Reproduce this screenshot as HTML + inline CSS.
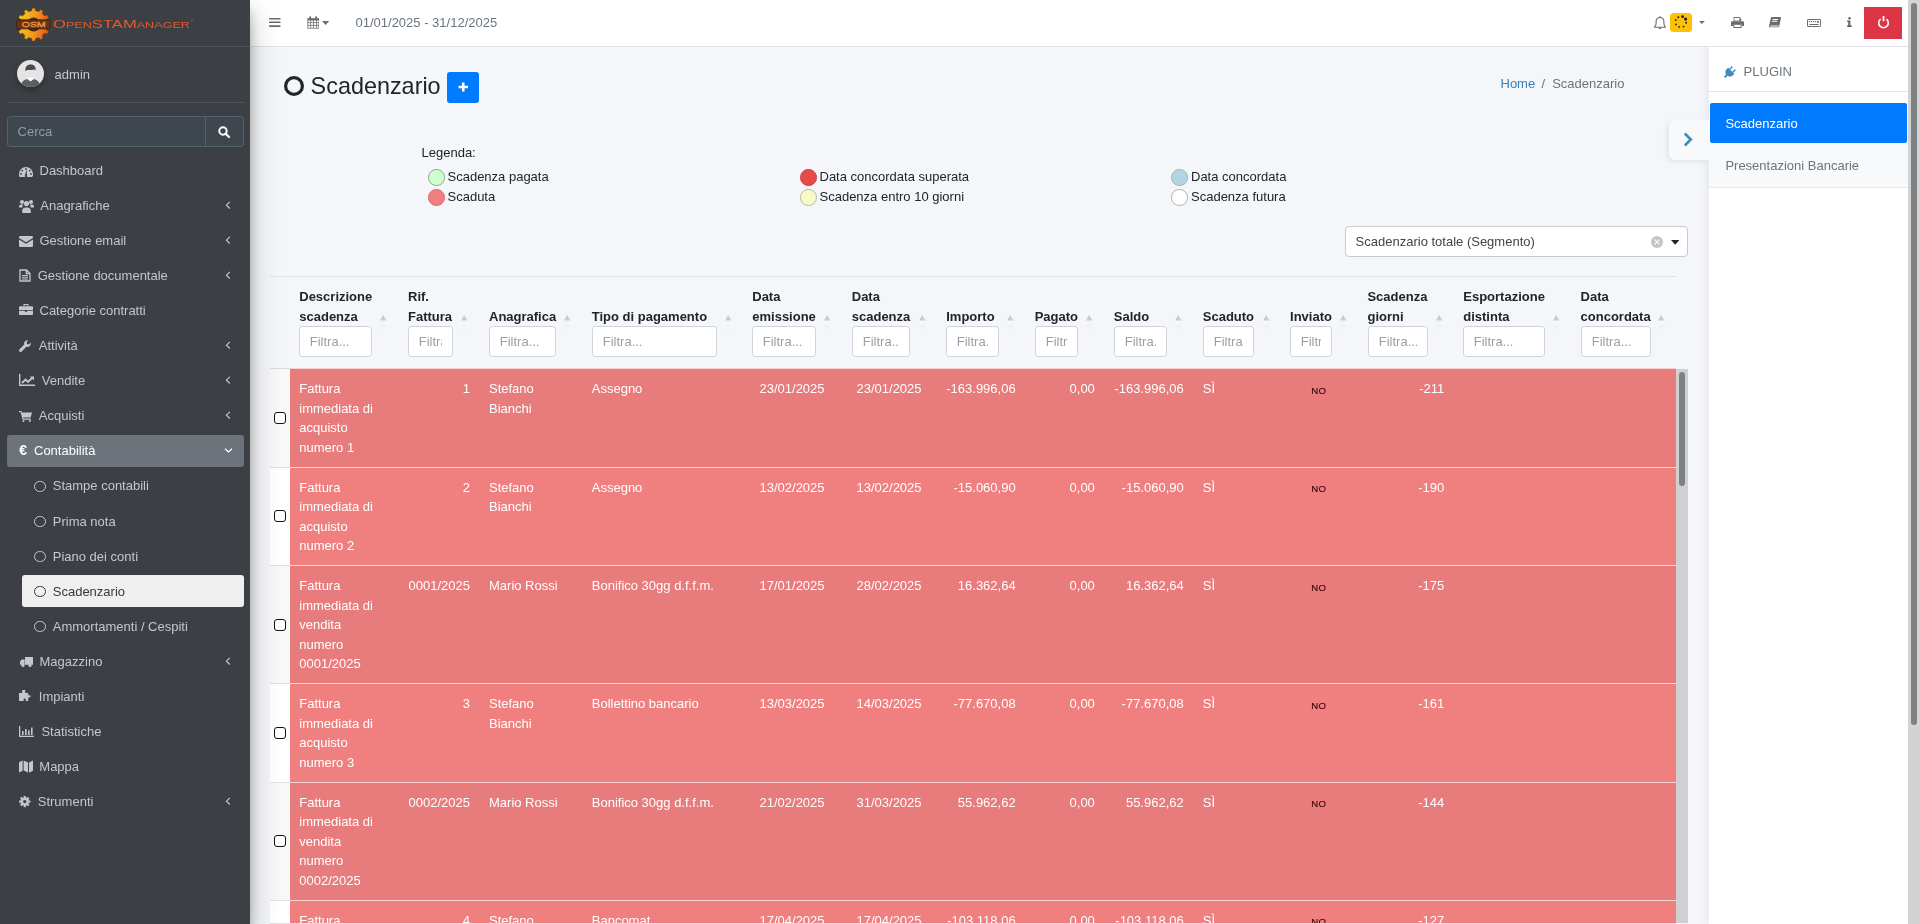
<!DOCTYPE html>
<html><head><meta charset="utf-8">
<style>
*{box-sizing:border-box}
html,body{margin:0;padding:0;width:1920px;height:924px;overflow:hidden}
body{font-family:"Liberation Sans",sans-serif;font-size:13px;line-height:1.5;color:#212529;background:#f4f6f9;position:relative}
.abs{position:absolute}
svg.abs{overflow:visible}
#sb{position:absolute;left:0;top:0;width:250px;height:924px;background:#3c3f44;z-index:7;box-shadow:0 14px 28px rgba(0,0,0,.25),0 10px 10px rgba(0,0,0,.22)}
#nb{position:absolute;left:250px;top:0;width:1658px;height:47px;background:#fff;border-bottom:1px solid #dee2e6;z-index:6}
#cs{position:absolute;left:1709px;top:47px;width:199px;height:877px;background:#fff;z-index:4;box-shadow:0 0 12px rgba(0,0,0,.09)}
#vs{position:absolute;left:1908px;top:0;width:12px;height:924px;background:#d3d3d3;z-index:9}
#vs .th{position:absolute;left:3px;top:3px;width:6px;height:722px;border-radius:3px;background:#7d8184}
</style></head><body>
<div id="root" style="position:absolute;left:0;top:0;width:1920px;height:924px;overflow:hidden;will-change:transform">
<div id="sb">
<div class="abs" style="left:0;top:46px;width:250px;height:1px;background:#50565d"></div>
<svg class="abs" style="left:17px;top:8px" width="34" height="34" viewBox="0 0 34 34">
<defs><linearGradient id="g1" gradientUnits="userSpaceOnUse" x1="2" y1="14" x2="32" y2="19"><stop offset="0" stop-color="#f6c716"/><stop offset=".55" stop-color="#f19420"/><stop offset="1" stop-color="#e6531f"/></linearGradient></defs>
<path d="M14.77 2.72 L15.13 0.17 L18.07 0.17 L18.43 2.72 L21.96 3.67 L23.55 1.63 L26.09 3.10 L25.12 5.49 L27.71 8.08 L30.10 7.11 L31.57 9.65 L29.53 11.24 L30.48 14.77 L33.03 15.13 L33.03 18.07 L30.48 18.43 L29.53 21.96 L31.57 23.55 L30.10 26.09 L27.71 25.12 L25.12 27.71 L26.09 30.10 L23.55 31.57 L21.96 29.53 L18.43 30.48 L18.07 33.03 L15.13 33.03 L14.77 30.48 L11.24 29.53 L9.65 31.57 L7.11 30.10 L8.08 27.71 L5.49 25.12 L3.10 26.09 L1.63 23.55 L3.67 21.96 L2.72 18.43 L0.17 18.07 L0.17 15.13 L2.72 14.77 L3.67 11.24 L1.63 9.65 L3.10 7.11 L5.49 8.08 L8.08 5.49 L7.11 3.10 L9.65 1.63 L11.24 3.67Z" fill="url(#g1)" stroke="#7a3a10" stroke-width=".4" stroke-linejoin="round"/>
<circle cx="16.6" cy="16.6" r="7" fill="#4a2a16"/>
<rect x="-0.4" y="11.8" width="33.4" height="9" rx="1.5" fill="#6a3412" stroke="#3e1d0a" stroke-width=".8"/>
<text x="16.8" y="19" font-family="Liberation Sans" font-size="7.4" fill="none" stroke="#f29a4a" stroke-width=".5" text-anchor="middle" textLength="24" lengthAdjust="spacingAndGlyphs">OSM</text>
</svg>
<svg class="abs" style="left:52px;top:14px" width="145" height="18" viewBox="0 0 145 18">
<text x="1" y="14" font-family="Liberation Sans" fill="#e35b2b" textLength="137" lengthAdjust="spacingAndGlyphs"><tspan font-size="11.3">O</tspan><tspan font-size="8.6">PEN</tspan><tspan font-size="11.3">STAM</tspan><tspan font-size="8.6">ANAGER</tspan></text>
<circle cx="140" cy="6.5" r="1.3" fill="none" stroke="#a05030" stroke-width=".5"/>
</svg>
<!-- user -->
<div class="abs" style="left:17px;top:60px;width:27px;height:27px;border-radius:50%;box-shadow:0 3px 6px rgba(0,0,0,.3)"></div>
<svg class="abs" style="left:17px;top:60px" width="27" height="27" viewBox="0 0 27 27">
<defs><clipPath id="cp"><circle cx="13.5" cy="13.5" r="13.5"/></clipPath></defs>
<circle cx="13.5" cy="13.5" r="13.5" fill="#e4e4e4"/>
<g clip-path="url(#cp)">
<path d="M3.5 27.5c.3-4.5 2.2-7.5 6.8-8.6l3.2 2.3 3.2-2.3c4.6 1.1 6.5 4.1 6.8 8.6z" fill="#5b5f63"/>
<path d="M10.3 18.9l3.2 2.3 3.2-2.3-.6-1.6h-5.2z" fill="#fafafa"/>
<path d="M8.4 11.2C8 6.6 10.3 4.6 13.5 4.6 16.9 4.6 19 6.4 18.6 10.6 18 10.2 17.6 9.8 17.2 9.4 15 10 12.4 10.1 10.2 9.9 9.6 10.3 9.1 10.7 8.4 11.2Z" fill="#474b4f"/>
</g>
</svg>
<div class="abs" style="left:54.6px;top:64.5px;line-height:19.5px;color:#c2c7d0">admin</div>
<div class="abs" style="left:7px;top:102px;width:237px;height:1px;background:#50565d"></div>
<!-- search -->
<div class="abs" style="left:7px;top:116px;width:237px;height:31px;border:1px solid #56606a;border-radius:3.25px;background:#3f474e"></div>
<div class="abs" style="left:205px;top:116px;width:1px;height:31px;background:#56606a"></div>
<div class="abs" style="left:17.6px;top:121.5px;line-height:19.5px;color:#939ba2">Cerca</div>
<svg class="abs" style="left:218px;top:126px" width="12" height="12" viewBox="0 0 12 12"><circle cx="5" cy="5" r="3.7" fill="none" stroke="#fff" stroke-width="2"/><path d="M7.6 7.6l3.4 3.4" stroke="#fff" stroke-width="2.2" stroke-linecap="round"/></svg>
<svg class="abs" style="left:19px;top:166.5px" width="14" height="10" viewBox="0 0 14 10"><path d="M7 0A7 7 0 0 0 0 7v1.2A1.4 1.4 0 0 0 1.4 10h11.2A1.4 1.4 0 0 0 14 8.6V7A7 7 0 0 0 7 0z" fill="#c2c7d0"/><circle cx="7" cy="2" r=".9" fill="#3c3f44"/><circle cx="3.2" cy="3.6" r=".9" fill="#3c3f44"/><circle cx="10.8" cy="3.6" r=".9" fill="#3c3f44"/><circle cx="2" cy="7" r=".9" fill="#3c3f44"/><circle cx="12" cy="7" r=".9" fill="#3c3f44"/><path d="M7.6 2.6L6 8.2A1.2 1.2 0 1 0 8 8.4z" fill="#3c3f44"/></svg>
<div class="abs" style="left:39.5px;top:160.5px;line-height:19.5px;color:#c2c7d0;white-space:nowrap">Dashboard</div>
<svg class="abs" style="left:19px;top:198.5px" width="15" height="14" viewBox="0 0 15 14" fill="#c2c7d0"><circle cx="3" cy="3" r="2"/><circle cx="12" cy="3" r="2"/><circle cx="7.5" cy="4.6" r="2.6"/><path d="M0 7.2a2 2 0 0 1 2-1.8h2.2a3 3 0 0 0-.6 3.2H0z"/><path d="M15 7.2a2 2 0 0 0-2-1.8h-2.2a3 3 0 0 1 .6 3.2H15z"/><path d="M3.2 12.2a3.4 3.4 0 0 1 3.4-3.8h1.8a3.4 3.4 0 0 1 3.4 3.8V14H3.2z"/></svg>
<div class="abs" style="left:40.25px;top:195.6px;line-height:19.5px;color:#c2c7d0;white-space:nowrap">Anagrafiche</div>
<svg class="abs" style="left:225px;top:200.7px" width="6" height="9" viewBox="0 0 6 9"><path d="M4.8 .9L1.4 4.2 4.8 7.5" fill="none" stroke="#c2c7d0" stroke-width="1.15"/></svg>
<svg class="abs" style="left:19px;top:235.5px" width="14" height="11" viewBox="0 0 14 11" fill="#c2c7d0"><path d="M1.3 0h11.4A1.3 1.3 0 0 1 14 1.3v.6L7 6.2 0 1.9v-.6A1.3 1.3 0 0 1 1.3 0z"/><path d="M0 3.4l7 4.4 7-4.4v6.3A1.3 1.3 0 0 1 12.7 11H1.3A1.3 1.3 0 0 1 0 9.7z"/></svg>
<div class="abs" style="left:39.5px;top:230.7px;line-height:19.5px;color:#c2c7d0;white-space:nowrap">Gestione email</div>
<svg class="abs" style="left:225px;top:235.8px" width="6" height="9" viewBox="0 0 6 9"><path d="M4.8 .9L1.4 4.2 4.8 7.5" fill="none" stroke="#c2c7d0" stroke-width="1.15"/></svg>
<svg class="abs" style="left:19px;top:269px" width="12" height="13" viewBox="0 0 12 13" fill="none" stroke="#c2c7d0" stroke-width="1.3"><path d="M1 1h6.5L11 4.5V12H1z"/><path d="M7.3 1v3.5H11"/><path d="M3 6.5h6M3 8.3h6M3 10.1h6" stroke-width="1"/></svg>
<div class="abs" style="left:37.75px;top:265.8px;line-height:19.5px;color:#c2c7d0;white-space:nowrap">Gestione documentale</div>
<svg class="abs" style="left:225px;top:270.9px" width="6" height="9" viewBox="0 0 6 9"><path d="M4.8 .9L1.4 4.2 4.8 7.5" fill="none" stroke="#c2c7d0" stroke-width="1.15"/></svg>
<svg class="abs" style="left:19px;top:304px" width="14" height="11" viewBox="0 0 14 11" fill="#c2c7d0"><path d="M4.5 0h5v2.2H8.5V1h-3v1.2h-1z"/><path d="M1 2.2h12A1 1 0 0 1 14 3.2V6H0V3.2a1 1 0 0 1 1-1z"/><path d="M0 6.8h5.8v1h2.4v-1H14V10a1 1 0 0 1-1 1H1a1 1 0 0 1-1-1z"/></svg>
<div class="abs" style="left:39.5px;top:300.9px;line-height:19.5px;color:#c2c7d0;white-space:nowrap">Categorie contratti</div>
<svg class="abs" style="left:19px;top:339.5px" width="12" height="12" viewBox="0 0 12 12" fill="#c2c7d0"><path d="M11.8 2.6L10 4.4 8.1 4 7.6 2.1 9.4.3A3.4 3.4 0 0 0 5.2 4.6L.5 9.2a1.5 1.5 0 0 0 2.2 2.2l4.7-4.6a3.4 3.4 0 0 0 4.4-4.2z"/></svg>
<div class="abs" style="left:38.75px;top:336.0px;line-height:19.5px;color:#c2c7d0;white-space:nowrap">Attività</div>
<svg class="abs" style="left:225px;top:341.1px" width="6" height="9" viewBox="0 0 6 9"><path d="M4.8 .9L1.4 4.2 4.8 7.5" fill="none" stroke="#c2c7d0" stroke-width="1.15"/></svg>
<svg class="abs" style="left:19px;top:374px" width="16" height="12" viewBox="0 0 16 12" fill="none" stroke="#c2c7d0"><path d="M.7 0v11.3H16" stroke-width="1.4"/><path d="M3 9l3.5-3.5 2.5 2.5 4.5-4.5" stroke-width="1.8"/><path d="M11 2.5h4v4z" fill="#c2c7d0" stroke="none"/></svg>
<div class="abs" style="left:41.75px;top:371.1px;line-height:19.5px;color:#c2c7d0;white-space:nowrap">Vendite</div>
<svg class="abs" style="left:225px;top:376.2px" width="6" height="9" viewBox="0 0 6 9"><path d="M4.8 .9L1.4 4.2 4.8 7.5" fill="none" stroke="#c2c7d0" stroke-width="1.15"/></svg>
<svg class="abs" style="left:19px;top:410.5px" width="13" height="11" viewBox="0 0 13 11" fill="#c2c7d0"><path d="M0 0h2.4l.5 1.5H13l-1.4 5H4.2l.3 1H12v1.2H3.6L1.6 1.2H0z"/><circle cx="4.5" cy="10" r="1"/><circle cx="10.8" cy="10" r="1"/></svg>
<div class="abs" style="left:38.75px;top:406.2px;line-height:19.5px;color:#c2c7d0;white-space:nowrap">Acquisti</div>
<svg class="abs" style="left:225px;top:411.3px" width="6" height="9" viewBox="0 0 6 9"><path d="M4.8 .9L1.4 4.2 4.8 7.5" fill="none" stroke="#c2c7d0" stroke-width="1.15"/></svg>
<div class="abs" style="left:7px;top:434.8px;width:237px;height:32px;border-radius:3px;background:#6c737b"></div>
<div class="abs" style="left:19.2px;top:440.5px;font-size:14px;line-height:19.5px;font-weight:bold;color:#fff">€</div>
<div class="abs" style="left:34px;top:441.3px;line-height:19.5px;color:#fff;white-space:nowrap">Contabilità</div>
<svg class="abs" style="left:224.2px;top:448.0px" width="9" height="6" viewBox="0 0 9 6"><path d="M1 .8l3.5 3.2L8 .8" fill="none" stroke="#fff" stroke-width="1.2"/></svg>
<div class="abs" style="left:34.4px;top:480.5px;width:11.4px;height:11.4px;border-radius:50%;border:1.8px solid #c2c7d0"></div>
<div class="abs" style="left:52.75px;top:476.4px;line-height:19.5px;color:#c2c7d0;white-space:nowrap">Stampe contabili</div>
<div class="abs" style="left:34.4px;top:515.6px;width:11.4px;height:11.4px;border-radius:50%;border:1.8px solid #c2c7d0"></div>
<div class="abs" style="left:52.75px;top:511.5px;line-height:19.5px;color:#c2c7d0;white-space:nowrap">Prima nota</div>
<div class="abs" style="left:34.4px;top:550.7px;width:11.4px;height:11.4px;border-radius:50%;border:1.8px solid #c2c7d0"></div>
<div class="abs" style="left:52.75px;top:546.6px;line-height:19.5px;color:#c2c7d0;white-space:nowrap">Piano dei conti</div>
<div class="abs" style="left:22px;top:575.2px;width:222px;height:32px;border-radius:3px;background:#efefef"></div>
<div class="abs" style="left:34.4px;top:585.8px;width:11.4px;height:11.4px;border-radius:50%;border:1.8px solid #343a40"></div>
<div class="abs" style="left:52.75px;top:581.7px;line-height:19.5px;color:#343a40;white-space:nowrap">Scadenzario</div>
<div class="abs" style="left:34.4px;top:620.9px;width:11.4px;height:11.4px;border-radius:50%;border:1.8px solid #c2c7d0"></div>
<div class="abs" style="left:52.75px;top:616.8px;line-height:19.5px;color:#c2c7d0;white-space:nowrap">Ammortamenti / Cespiti</div>
<svg class="abs" style="left:19.7px;top:657px" width="13" height="10" viewBox="0 0 13 10" fill="#c2c7d0"><path d="M5 0h8v7.8H5z"/><path d="M1.6 2.6h3v5.2H0V4.6z"/><circle cx="3" cy="8.4" r="1.6"/><circle cx="10" cy="8.4" r="1.6"/></svg>
<div class="abs" style="left:39.5px;top:651.9px;line-height:19.5px;color:#c2c7d0;white-space:nowrap">Magazzino</div>
<svg class="abs" style="left:225px;top:657.0px" width="6" height="9" viewBox="0 0 6 9"><path d="M4.8 .9L1.4 4.2 4.8 7.5" fill="none" stroke="#c2c7d0" stroke-width="1.15"/></svg>
<svg class="abs" style="left:19px;top:690px" width="13" height="11" viewBox="0 0 13 11" fill="#c2c7d0"><path d="M4 0h2.2v1.4a1 1 0 1 0 0 0V3h3v2.2h1.3a1.1 1.1 0 1 1 0 2.2H9.2V11H6.8V9.6a1.1 1.1 0 1 0-2.2 0V11H0V3h3.2V1.6A1 1 0 0 1 4 0z"/></svg>
<div class="abs" style="left:38.8px;top:687.0px;line-height:19.5px;color:#c2c7d0;white-space:nowrap">Impianti</div>
<svg class="abs" style="left:19px;top:726px" width="15" height="11" viewBox="0 0 15 11" fill="#c2c7d0"><path d="M0 0h1.3v9.7H15V11H0z"/><rect x="3" y="5" width="1.6" height="4"/><rect x="6" y="3" width="1.6" height="6"/><rect x="9" y="4.3" width="1.6" height="4.7"/><rect x="12" y="1.5" width="1.6" height="7.5"/></svg>
<div class="abs" style="left:41.4px;top:722.1px;line-height:19.5px;color:#c2c7d0;white-space:nowrap">Statistiche</div>
<svg class="abs" style="left:19px;top:760px" width="14" height="13" viewBox="0 0 14 13" fill="#c2c7d0"><path d="M0 2.3L3.6 0.5v10.2L0 12.5z"/><path d="M4.6 0.5l4.4 2v10l-4.4-2z"/><path d="M10 2.5l4-2v10.2l-4 2z"/></svg>
<div class="abs" style="left:39.3px;top:757.2px;line-height:19.5px;color:#c2c7d0;white-space:nowrap">Mappa</div>
<svg class="abs" style="left:19.2px;top:796px" width="11.5" height="11.2" viewBox="0 0 11.5 11.2"><g fill="#c2c7d0" transform="translate(5.75 5.6)"><circle r="4.1"/><rect x="-1.1" y="-5.6" width="2.2" height="11.2"/><rect x="-5.75" y="-1.1" width="11.5" height="2.2"/><rect x="-1.1" y="-5.6" width="2.2" height="11.2" transform="rotate(45)"/><rect x="-1.1" y="-5.6" width="2.2" height="11.2" transform="rotate(-45)"/></g><circle cx="5.75" cy="5.6" r="1.7" fill="#3c3f44"/></svg>
<div class="abs" style="left:37.75px;top:792.3px;line-height:19.5px;color:#c2c7d0;white-space:nowrap">Strumenti</div>
<svg class="abs" style="left:225px;top:797.4px" width="6" height="9" viewBox="0 0 6 9"><path d="M4.8 .9L1.4 4.2 4.8 7.5" fill="none" stroke="#c2c7d0" stroke-width="1.15"/></svg>
</div>
<div id="nb">
<svg class="abs" style="left:19px;top:17px" width="12" height="11" viewBox="0 0 12 11" fill="#6b6b6b"><rect x="0" y="1" width="11.6" height="1.6" rx=".6"/><rect x="0" y="4.5" width="11.6" height="1.6" rx=".6"/><rect x="0" y="8.2" width="11.6" height="1.7" rx=".6"/></svg>
<svg class="abs" style="left:56.5px;top:16px" width="13" height="13" viewBox="0 0 13 13"><path d="M.4 2.2h11.6v10.4H.4z" fill="#6b6b6b"/><rect x="2.3" y=".2" width="1.8" height="3.3" rx=".7" fill="#6b6b6b"/><rect x="8.2" y=".2" width="1.8" height="3.3" rx=".7" fill="#6b6b6b"/><g fill="#fff"><rect x="1.2" y="4.5" width="2.2" height="1.8"/><rect x="4.1" y="4.5" width="2.2" height="1.8"/><rect x="7" y="4.5" width="2.2" height="1.8"/><rect x="9.9" y="4.5" width="1.6" height="1.8"/><rect x="1.2" y="7.1" width="2.2" height="1.8"/><rect x="4.1" y="7.1" width="2.2" height="1.8"/><rect x="7" y="7.1" width="2.2" height="1.8"/><rect x="9.9" y="7.1" width="1.6" height="1.8"/><rect x="1.2" y="9.7" width="2.2" height="2.1"/><rect x="4.1" y="9.7" width="2.2" height="2.1"/><rect x="7" y="9.7" width="2.2" height="2.1"/><rect x="9.9" y="9.7" width="1.6" height="2.1"/></g></svg>
<svg class="abs" style="left:72.3px;top:20.8px" width="8" height="5" viewBox="0 0 8 5"><path d="M0 0h7.2L3.6 4z" fill="#6b6b6b"/></svg>
<div class="abs" style="left:105.5px;top:13.2px;line-height:19.5px;color:#6c757d">01/01/2025 - 31/12/2025</div>
<!-- right -->
<svg class="abs" style="left:1403.5px;top:15.5px" width="12" height="14" viewBox="0 0 12 14"><path d="M6 1.5c-2.4 0-3.9 1.8-3.9 4.2v2.5L.7 10.6v.6h10.6v-.6L9.9 8.2V5.7C9.9 3.3 8.4 1.5 6 1.5z" fill="none" stroke="#6b6b6b" stroke-width="1.1"/><rect x="5.3" y=".3" width="1.4" height="1.6" fill="#6b6b6b"/><path d="M4.6 11.8h2.8a1.4 1.4 0 0 1-2.8 0z" fill="#6b6b6b"/></svg>
<div class="abs" style="left:1420px;top:13px;width:22px;height:19px;border-radius:3.5px;background:#ffc107"></div>
<svg class="abs" style="left:1420px;top:13px" width="22" height="19" viewBox="0 0 22 19" fill="#1d1d1d"><circle cx="12.6" cy="3.7" r="1.4"/><circle cx="15.6" cy="6.1" r="1.6"/><circle cx="16.1" cy="9.7" r="1"/><circle cx="13.5" cy="13.6" r=".9"/><circle cx="9.1" cy="13.9" r=".9"/><circle cx="6" cy="11.4" r=".9"/><circle cx="5.7" cy="7" r=".9"/><circle cx="8.3" cy="4.3" r="1"/></svg>
<svg class="abs" style="left:1449px;top:21.2px" width="6" height="4" viewBox="0 0 6 4"><path d="M0 0h5.8L2.9 3z" fill="#6b6b6b"/></svg>
<svg class="abs" style="left:1481px;top:17px" width="13" height="11" viewBox="0 0 13 11" fill="#6b6b6b"><path d="M2.6 0h5.8l1.8 1.8v2.4H2.6z"/><path d="M1.2 4.2h10.6A1.2 1.2 0 0 1 13 5.4v3.6h-2.4v-2H2.4v2H0V5.4a1.2 1.2 0 0 1 1.2-1.2z"/><rect x="2.4" y="7" width="8.2" height="4"/><rect x="3.4" y="1" width="5" height="2.6" fill="#fff"/><rect x="3.4" y="7.8" width="6.2" height="2.2" fill="#fff"/></svg>
<svg class="abs" style="left:1519px;top:17px" width="12" height="11" viewBox="0 0 12 11" fill="#6b6b6b"><path d="M3 0h8.4a.6.6 0 0 1 .6.7L10.2 9.4a1.2 1.2 0 0 1-1.1.9H1a1 1 0 0 1-1-1.2L1.9.9A1.2 1.2 0 0 1 3 0z"/><path d="M1.4 8.6h8.3l-.3 1H1.3z" fill="#fff"/><rect x="4.2" y="2" width="5.2" height=".9" fill="#fff" transform="skewX(-12)"/><rect x="4" y="3.8" width="5.2" height=".9" fill="#fff" transform="skewX(-12)"/></svg>
<svg class="abs" style="left:1557px;top:19px" width="14" height="8" viewBox="0 0 14 8"><rect x=".5" y=".5" width="13" height="7" rx=".6" fill="none" stroke="#6b6b6b" stroke-width="1"/><g fill="#6b6b6b"><rect x="2" y="2" width="1.2" height="1.2"/><rect x="4" y="2" width="1.2" height="1.2"/><rect x="6" y="2" width="1.2" height="1.2"/><rect x="8" y="2" width="1.2" height="1.2"/><rect x="10" y="2" width="1.8" height="1.8"/><rect x="2.4" y="5" width="9.2" height="1"/></g></svg>
<svg class="abs" style="left:1596.5px;top:17px" width="5" height="10" viewBox="0 0 5 10" fill="#5f5f5f"><circle cx="2.5" cy="1.2" r="1.2"/><path d="M.2 3.4h3.1v4.9h1.3V10H.3V8.3h1V5H.2z"/></svg>
<div class="abs" style="left:1614px;top:7px;width:38px;height:32px;background:#dc3545"></div>
<svg class="abs" style="left:1626.5px;top:16px" width="13" height="12" viewBox="0 0 13 12"><path d="M3.6 3.1a4.8 4.8 0 1 0 5.8 0" fill="none" stroke="#fff" stroke-width="1.6"/><path d="M6.5 0v5.2" stroke="#fff" stroke-width="1.8"/></svg>
</div>
<div id="content">
<svg class="abs" style="left:284px;top:76px" width="20" height="20" viewBox="0 0 20 20"><circle cx="10" cy="10" r="8.4" fill="none" stroke="#212529" stroke-width="3.2"/></svg>
<div class="abs" style="left:310.6px;top:72px;font-size:23.4px;line-height:28px;color:#212529;white-space:nowrap">Scadenzario</div>
<div class="abs" style="left:447px;top:72px;width:32px;height:30.5px;background:#007bff;border-radius:3px"></div>
<svg class="abs" style="left:457.8px;top:82.3px" width="10.5" height="10" viewBox="0 0 10.5 10"><path d="M5.25 .5v9M.5 5h9.5" stroke="#fff" stroke-width="2.6"/></svg>
<div class="abs" style="left:1500.5px;top:73.8px;line-height:19.5px;color:#3480c0;white-space:nowrap;">Home</div>
<div class="abs" style="left:1541.5px;top:73.8px;line-height:19.5px;color:#6c757d;white-space:nowrap;">/</div>
<div class="abs" style="left:1552.2px;top:73.8px;line-height:19.5px;color:#6c757d;white-space:nowrap;">Scadenzario</div>
<div class="abs" style="left:421.5px;top:142.7px;line-height:19.5px;color:#212529;white-space:nowrap;">Legenda:</div>
<div class="abs" style="left:428px;top:169px;width:16.5px;height:16.5px;border-radius:50%;background:#ccffcc;border:1px solid #8fa88f"></div>
<div class="abs" style="left:447.5px;top:167px;line-height:19.5px;color:#212529;white-space:nowrap;">Scadenza pagata</div>
<div class="abs" style="left:428px;top:189px;width:16.5px;height:16.5px;border-radius:50%;background:#f08080;border:1px solid #d77272"></div>
<div class="abs" style="left:447.5px;top:187px;line-height:19.5px;color:#212529;white-space:nowrap;">Scaduta</div>
<div class="abs" style="left:800px;top:169px;width:16.5px;height:16.5px;border-radius:50%;background:#e84a4a;border:1px solid #c94444"></div>
<div class="abs" style="left:819.5px;top:167px;line-height:19.5px;color:#212529;white-space:nowrap;">Data concordata superata</div>
<div class="abs" style="left:800px;top:189px;width:16.5px;height:16.5px;border-radius:50%;background:#fafac8;border:1px solid #b8b89a"></div>
<div class="abs" style="left:819.5px;top:187px;line-height:19.5px;color:#212529;white-space:nowrap;">Scadenza entro 10 giorni</div>
<div class="abs" style="left:1171px;top:169px;width:16.5px;height:16.5px;border-radius:50%;background:#b3d4e2;border:1px solid #9ab6c2"></div>
<div class="abs" style="left:1191px;top:167px;line-height:19.5px;color:#212529;white-space:nowrap;">Data concordata</div>
<div class="abs" style="left:1171px;top:189px;width:16.5px;height:16.5px;border-radius:50%;background:#ffffff;border:1px solid #b0b0b0"></div>
<div class="abs" style="left:1191px;top:187px;line-height:19.5px;color:#212529;white-space:nowrap;">Scadenza futura</div>
<div class="abs" style="left:1345.4px;top:226.4px;width:342.3px;height:30.2px;background:#fff;border:1px solid #c6cbd1;border-radius:4px"></div>
<div class="abs" style="left:1355.6px;top:232.3px;line-height:19.5px;color:#444;white-space:nowrap;">Scadenzario totale (Segmento)</div>
<svg class="abs" style="left:1651px;top:236px" width="12" height="12" viewBox="0 0 12 12"><circle cx="6" cy="6" r="6" fill="#c4c4c4"/><path d="M3.6 3.6l4.8 4.8M8.4 3.6L3.6 8.4" stroke="#fff" stroke-width="1.1"/></svg>
<svg class="abs" style="left:1671px;top:239.8px" width="9" height="5" viewBox="0 0 9 5"><path d="M0 0h8.4L4.2 4.8z" fill="#212529"/></svg>
<div class="abs" style="left:270px;top:276px;width:1406px;height:1px;background:#dfe2e5"></div>
<div class="abs" style="left:299.25px;top:287px;line-height:19.5px;color:#212529;white-space:nowrap;font-weight:bold">Descrizione</div>
<div class="abs" style="left:299.25px;top:306.5px;line-height:19.5px;color:#212529;white-space:nowrap;font-weight:bold">scadenza</div>
<div class="abs" style="left:299px;top:326px;width:73px;height:31px;background:#fff;border:1px solid #ced4da;border-radius:3.25px"><div class="abs" style="left:9.75px;top:4.75px;width:51.50px;height:19.5px;overflow:hidden;line-height:19.5px;color:#9aa0a6;white-space:nowrap">Filtra...</div></div>
<svg class="abs" style="left:380.45px;top:315.2px" width="6.3" height="5.5" viewBox="0 0 6.3 5.5"><path d="M3.15 0L6.3 5.5H0z" fill="#c9cbce"/></svg>
<svg class="abs" style="left:380.45px;top:325px" width="6.3" height="5.5" viewBox="0 0 6.3 5.5"><path d="M0 0h6.3L3.15 5.5z" fill="#f0f1f4"/></svg>
<div class="abs" style="left:408.0px;top:287px;line-height:19.5px;color:#212529;white-space:nowrap;font-weight:bold">Rif.</div>
<div class="abs" style="left:408.0px;top:306.5px;line-height:19.5px;color:#212529;white-space:nowrap;font-weight:bold">Fattura</div>
<div class="abs" style="left:408px;top:326px;width:45px;height:31px;background:#fff;border:1px solid #ced4da;border-radius:3.25px"><div class="abs" style="left:9.75px;top:4.75px;width:23.50px;height:19.5px;overflow:hidden;line-height:19.5px;color:#9aa0a6;white-space:nowrap">Filtra...</div></div>
<svg class="abs" style="left:461.45px;top:315.2px" width="6.3" height="5.5" viewBox="0 0 6.3 5.5"><path d="M3.15 0L6.3 5.5H0z" fill="#c9cbce"/></svg>
<svg class="abs" style="left:461.45px;top:325px" width="6.3" height="5.5" viewBox="0 0 6.3 5.5"><path d="M0 0h6.3L3.15 5.5z" fill="#f0f1f4"/></svg>
<div class="abs" style="left:489.0px;top:306.5px;line-height:19.5px;color:#212529;white-space:nowrap;font-weight:bold">Anagrafica</div>
<div class="abs" style="left:489px;top:326px;width:67px;height:31px;background:#fff;border:1px solid #ced4da;border-radius:3.25px"><div class="abs" style="left:9.75px;top:4.75px;width:45.50px;height:19.5px;overflow:hidden;line-height:19.5px;color:#9aa0a6;white-space:nowrap">Filtra...</div></div>
<svg class="abs" style="left:564.20px;top:315.2px" width="6.3" height="5.5" viewBox="0 0 6.3 5.5"><path d="M3.15 0L6.3 5.5H0z" fill="#c9cbce"/></svg>
<svg class="abs" style="left:564.20px;top:325px" width="6.3" height="5.5" viewBox="0 0 6.3 5.5"><path d="M0 0h6.3L3.15 5.5z" fill="#f0f1f4"/></svg>
<div class="abs" style="left:591.75px;top:306.5px;line-height:19.5px;color:#212529;white-space:nowrap;font-weight:bold">Tipo di pagamento</div>
<div class="abs" style="left:592px;top:326px;width:125px;height:31px;background:#fff;border:1px solid #ced4da;border-radius:3.25px"><div class="abs" style="left:9.75px;top:4.75px;width:103.50px;height:19.5px;overflow:hidden;line-height:19.5px;color:#9aa0a6;white-space:nowrap">Filtra...</div></div>
<svg class="abs" style="left:724.70px;top:315.2px" width="6.3" height="5.5" viewBox="0 0 6.3 5.5"><path d="M3.15 0L6.3 5.5H0z" fill="#c9cbce"/></svg>
<svg class="abs" style="left:724.70px;top:325px" width="6.3" height="5.5" viewBox="0 0 6.3 5.5"><path d="M0 0h6.3L3.15 5.5z" fill="#f0f1f4"/></svg>
<div class="abs" style="left:752.25px;top:287px;line-height:19.5px;color:#212529;white-space:nowrap;font-weight:bold">Data</div>
<div class="abs" style="left:752.25px;top:306.5px;line-height:19.5px;color:#212529;white-space:nowrap;font-weight:bold">emissione</div>
<div class="abs" style="left:752px;top:326px;width:64px;height:31px;background:#fff;border:1px solid #ced4da;border-radius:3.25px"><div class="abs" style="left:9.75px;top:4.75px;width:42.50px;height:19.5px;overflow:hidden;line-height:19.5px;color:#9aa0a6;white-space:nowrap">Filtra...</div></div>
<svg class="abs" style="left:824.20px;top:315.2px" width="6.3" height="5.5" viewBox="0 0 6.3 5.5"><path d="M3.15 0L6.3 5.5H0z" fill="#c9cbce"/></svg>
<svg class="abs" style="left:824.20px;top:325px" width="6.3" height="5.5" viewBox="0 0 6.3 5.5"><path d="M0 0h6.3L3.15 5.5z" fill="#f0f1f4"/></svg>
<div class="abs" style="left:851.75px;top:287px;line-height:19.5px;color:#212529;white-space:nowrap;font-weight:bold">Data</div>
<div class="abs" style="left:851.75px;top:306.5px;line-height:19.5px;color:#212529;white-space:nowrap;font-weight:bold">scadenza</div>
<div class="abs" style="left:852px;top:326px;width:58px;height:31px;background:#fff;border:1px solid #ced4da;border-radius:3.25px"><div class="abs" style="left:9.75px;top:4.75px;width:36.50px;height:19.5px;overflow:hidden;line-height:19.5px;color:#9aa0a6;white-space:nowrap">Filtra...</div></div>
<svg class="abs" style="left:918.70px;top:315.2px" width="6.3" height="5.5" viewBox="0 0 6.3 5.5"><path d="M3.15 0L6.3 5.5H0z" fill="#c9cbce"/></svg>
<svg class="abs" style="left:918.70px;top:325px" width="6.3" height="5.5" viewBox="0 0 6.3 5.5"><path d="M0 0h6.3L3.15 5.5z" fill="#f0f1f4"/></svg>
<div class="abs" style="left:946.25px;top:306.5px;line-height:19.5px;color:#212529;white-space:nowrap;font-weight:bold">Importo</div>
<div class="abs" style="left:946px;top:326px;width:53px;height:31px;background:#fff;border:1px solid #ced4da;border-radius:3.25px"><div class="abs" style="left:9.75px;top:4.75px;width:31.50px;height:19.5px;overflow:hidden;line-height:19.5px;color:#9aa0a6;white-space:nowrap">Filtra...</div></div>
<svg class="abs" style="left:1007.10px;top:315.2px" width="6.3" height="5.5" viewBox="0 0 6.3 5.5"><path d="M3.15 0L6.3 5.5H0z" fill="#c9cbce"/></svg>
<svg class="abs" style="left:1007.10px;top:325px" width="6.3" height="5.5" viewBox="0 0 6.3 5.5"><path d="M0 0h6.3L3.15 5.5z" fill="#f0f1f4"/></svg>
<div class="abs" style="left:1034.65px;top:306.5px;line-height:19.5px;color:#212529;white-space:nowrap;font-weight:bold">Pagato</div>
<div class="abs" style="left:1035px;top:326px;width:43px;height:31px;background:#fff;border:1px solid #ced4da;border-radius:3.25px"><div class="abs" style="left:9.75px;top:4.75px;width:21.50px;height:19.5px;overflow:hidden;line-height:19.5px;color:#9aa0a6;white-space:nowrap">Filtra...</div></div>
<svg class="abs" style="left:1086.30px;top:315.2px" width="6.3" height="5.5" viewBox="0 0 6.3 5.5"><path d="M3.15 0L6.3 5.5H0z" fill="#c9cbce"/></svg>
<svg class="abs" style="left:1086.30px;top:325px" width="6.3" height="5.5" viewBox="0 0 6.3 5.5"><path d="M0 0h6.3L3.15 5.5z" fill="#f0f1f4"/></svg>
<div class="abs" style="left:1113.85px;top:306.5px;line-height:19.5px;color:#212529;white-space:nowrap;font-weight:bold">Saldo</div>
<div class="abs" style="left:1114px;top:326px;width:53px;height:31px;background:#fff;border:1px solid #ced4da;border-radius:3.25px"><div class="abs" style="left:9.75px;top:4.75px;width:31.50px;height:19.5px;overflow:hidden;line-height:19.5px;color:#9aa0a6;white-space:nowrap">Filtra...</div></div>
<svg class="abs" style="left:1175.20px;top:315.2px" width="6.3" height="5.5" viewBox="0 0 6.3 5.5"><path d="M3.15 0L6.3 5.5H0z" fill="#c9cbce"/></svg>
<svg class="abs" style="left:1175.20px;top:325px" width="6.3" height="5.5" viewBox="0 0 6.3 5.5"><path d="M0 0h6.3L3.15 5.5z" fill="#f0f1f4"/></svg>
<div class="abs" style="left:1202.75px;top:306.5px;line-height:19.5px;color:#212529;white-space:nowrap;font-weight:bold">Scaduto</div>
<div class="abs" style="left:1203px;top:326px;width:51px;height:31px;background:#fff;border:1px solid #ced4da;border-radius:3.25px"><div class="abs" style="left:9.75px;top:4.75px;width:29.50px;height:19.5px;overflow:hidden;line-height:19.5px;color:#9aa0a6;white-space:nowrap">Filtra...</div></div>
<svg class="abs" style="left:1262.50px;top:315.2px" width="6.3" height="5.5" viewBox="0 0 6.3 5.5"><path d="M3.15 0L6.3 5.5H0z" fill="#c9cbce"/></svg>
<svg class="abs" style="left:1262.50px;top:325px" width="6.3" height="5.5" viewBox="0 0 6.3 5.5"><path d="M0 0h6.3L3.15 5.5z" fill="#f0f1f4"/></svg>
<div class="abs" style="left:1290.05px;top:306.5px;line-height:19.5px;color:#212529;white-space:nowrap;font-weight:bold">Inviato</div>
<div class="abs" style="left:1290px;top:326px;width:42px;height:31px;background:#fff;border:1px solid #ced4da;border-radius:3.25px"><div class="abs" style="left:9.75px;top:4.75px;width:20.50px;height:19.5px;overflow:hidden;line-height:19.5px;color:#9aa0a6;white-space:nowrap">Filtra...</div></div>
<svg class="abs" style="left:1339.90px;top:315.2px" width="6.3" height="5.5" viewBox="0 0 6.3 5.5"><path d="M3.15 0L6.3 5.5H0z" fill="#c9cbce"/></svg>
<svg class="abs" style="left:1339.90px;top:325px" width="6.3" height="5.5" viewBox="0 0 6.3 5.5"><path d="M0 0h6.3L3.15 5.5z" fill="#f0f1f4"/></svg>
<div class="abs" style="left:1367.45px;top:287px;line-height:19.5px;color:#212529;white-space:nowrap;font-weight:bold">Scadenza</div>
<div class="abs" style="left:1367.45px;top:306.5px;line-height:19.5px;color:#212529;white-space:nowrap;font-weight:bold">giorni</div>
<div class="abs" style="left:1368px;top:326px;width:60px;height:31px;background:#fff;border:1px solid #ced4da;border-radius:3.25px"><div class="abs" style="left:9.75px;top:4.75px;width:38.50px;height:19.5px;overflow:hidden;line-height:19.5px;color:#9aa0a6;white-space:nowrap">Filtra...</div></div>
<svg class="abs" style="left:1435.70px;top:315.2px" width="6.3" height="5.5" viewBox="0 0 6.3 5.5"><path d="M3.15 0L6.3 5.5H0z" fill="#c9cbce"/></svg>
<svg class="abs" style="left:1435.70px;top:325px" width="6.3" height="5.5" viewBox="0 0 6.3 5.5"><path d="M0 0h6.3L3.15 5.5z" fill="#f0f1f4"/></svg>
<div class="abs" style="left:1463.25px;top:287px;line-height:19.5px;color:#212529;white-space:nowrap;font-weight:bold">Esportazione</div>
<div class="abs" style="left:1463.25px;top:306.5px;line-height:19.5px;color:#212529;white-space:nowrap;font-weight:bold">distinta</div>
<div class="abs" style="left:1463px;top:326px;width:82px;height:31px;background:#fff;border:1px solid #ced4da;border-radius:3.25px"><div class="abs" style="left:9.75px;top:4.75px;width:60.50px;height:19.5px;overflow:hidden;line-height:19.5px;color:#9aa0a6;white-space:nowrap">Filtra...</div></div>
<svg class="abs" style="left:1553.00px;top:315.2px" width="6.3" height="5.5" viewBox="0 0 6.3 5.5"><path d="M3.15 0L6.3 5.5H0z" fill="#c9cbce"/></svg>
<svg class="abs" style="left:1553.00px;top:325px" width="6.3" height="5.5" viewBox="0 0 6.3 5.5"><path d="M0 0h6.3L3.15 5.5z" fill="#f0f1f4"/></svg>
<div class="abs" style="left:1580.55px;top:287px;line-height:19.5px;color:#212529;white-space:nowrap;font-weight:bold">Data</div>
<div class="abs" style="left:1580.55px;top:306.5px;line-height:19.5px;color:#212529;white-space:nowrap;font-weight:bold">concordata</div>
<div class="abs" style="left:1581px;top:326px;width:70px;height:31px;background:#fff;border:1px solid #ced4da;border-radius:3.25px"><div class="abs" style="left:9.75px;top:4.75px;width:48.50px;height:19.5px;overflow:hidden;line-height:19.5px;color:#9aa0a6;white-space:nowrap">Filtra...</div></div>
<svg class="abs" style="left:1658.20px;top:315.2px" width="6.3" height="5.5" viewBox="0 0 6.3 5.5"><path d="M3.15 0L6.3 5.5H0z" fill="#c9cbce"/></svg>
<svg class="abs" style="left:1658.20px;top:325px" width="6.3" height="5.5" viewBox="0 0 6.3 5.5"><path d="M0 0h6.3L3.15 5.5z" fill="#f0f1f4"/></svg>
<div class="abs" style="left:270px;top:367.5px;width:20px;height:1.5px;background:#dadde0"></div>
<div class="abs" style="left:290px;top:367.5px;width:1386px;height:1.5px;background:#f7d0d0"></div>
<div class="abs" style="left:270px;top:369px;width:1406px;height:554px;overflow:hidden">
<div class="abs" style="left:0;top:0.00px;width:20px;height:97.5px;background:#f8f8f8"></div>
<div class="abs" style="left:20px;top:0.00px;width:1386px;height:97.5px;background:#e87b7b"></div>
<div class="abs" style="left:4px;top:42.75px;width:12px;height:12px;border:1.5px solid #111;border-radius:3px;background:#fff"></div>
<div class="abs" style="left:29.25px;top:10.10px;line-height:19.5px;color:#fff;white-space:nowrap;">Fattura<br>immediata di<br>acquisto<br>numero 1</div>
<div class="abs" style="right:1206.00px;top:10.10px;line-height:19.5px;color:#fff;white-space:nowrap;text-align:right;">1</div>
<div class="abs" style="left:219.00px;top:10.10px;line-height:19.5px;color:#fff;white-space:nowrap;">Stefano<br>Bianchi</div>
<div class="abs" style="left:321.75px;top:10.10px;line-height:19.5px;color:#fff;white-space:nowrap;">Assegno</div>
<div class="abs" style="left:472.30px;width:99.50px;top:10.10px;line-height:19.5px;color:#fff;white-space:nowrap;text-align:center;">23/01/2025</div>
<div class="abs" style="left:571.80px;width:94.50px;top:10.10px;line-height:19.5px;color:#fff;white-space:nowrap;text-align:center;">23/01/2025</div>
<div class="abs" style="right:660.35px;top:10.10px;line-height:19.5px;color:#fff;white-space:nowrap;text-align:right;">-163.996,06</div>
<div class="abs" style="right:581.15px;top:10.10px;line-height:19.5px;color:#fff;white-space:nowrap;text-align:right;">0,00</div>
<div class="abs" style="right:492.25px;top:10.10px;line-height:19.5px;color:#fff;white-space:nowrap;text-align:right;">-163.996,06</div>
<div class="abs" style="left:932.75px;top:10.10px;line-height:19.5px;color:#fff;white-space:nowrap;">SÌ</div>
<div class="abs" style="left:1010.10px;width:77.40px;top:10.70px;line-height:19.5px;text-align:center;white-space:nowrap"><span style="display:inline-block;font-size:8.6px;font-weight:normal;-webkit-text-stroke:.15px #3a0808;color:#3a0808;transform:scaleX(1.12);letter-spacing:.3px">NO</span></div>
<div class="abs" style="right:231.75px;top:10.10px;line-height:19.5px;color:#fff;white-space:nowrap;text-align:right;">-211</div>
<div class="abs" style="left:0;top:97.50px;width:20px;height:1px;background:#dee2e6"></div>
<div class="abs" style="left:20px;top:97.50px;width:1386px;height:1px;background:#fbd3d3"></div>
<div class="abs" style="left:0;top:98.50px;width:20px;height:97.5px;background:#fff"></div>
<div class="abs" style="left:20px;top:98.50px;width:1386px;height:97.5px;background:#f08080"></div>
<div class="abs" style="left:4px;top:141.25px;width:12px;height:12px;border:1.5px solid #111;border-radius:3px;background:#fff"></div>
<div class="abs" style="left:29.25px;top:108.60px;line-height:19.5px;color:#fff;white-space:nowrap;">Fattura<br>immediata di<br>acquisto<br>numero 2</div>
<div class="abs" style="right:1206.00px;top:108.60px;line-height:19.5px;color:#fff;white-space:nowrap;text-align:right;">2</div>
<div class="abs" style="left:219.00px;top:108.60px;line-height:19.5px;color:#fff;white-space:nowrap;">Stefano<br>Bianchi</div>
<div class="abs" style="left:321.75px;top:108.60px;line-height:19.5px;color:#fff;white-space:nowrap;">Assegno</div>
<div class="abs" style="left:472.30px;width:99.50px;top:108.60px;line-height:19.5px;color:#fff;white-space:nowrap;text-align:center;">13/02/2025</div>
<div class="abs" style="left:571.80px;width:94.50px;top:108.60px;line-height:19.5px;color:#fff;white-space:nowrap;text-align:center;">13/02/2025</div>
<div class="abs" style="right:660.35px;top:108.60px;line-height:19.5px;color:#fff;white-space:nowrap;text-align:right;">-15.060,90</div>
<div class="abs" style="right:581.15px;top:108.60px;line-height:19.5px;color:#fff;white-space:nowrap;text-align:right;">0,00</div>
<div class="abs" style="right:492.25px;top:108.60px;line-height:19.5px;color:#fff;white-space:nowrap;text-align:right;">-15.060,90</div>
<div class="abs" style="left:932.75px;top:108.60px;line-height:19.5px;color:#fff;white-space:nowrap;">SÌ</div>
<div class="abs" style="left:1010.10px;width:77.40px;top:109.20px;line-height:19.5px;text-align:center;white-space:nowrap"><span style="display:inline-block;font-size:8.6px;font-weight:normal;-webkit-text-stroke:.15px #3a0808;color:#3a0808;transform:scaleX(1.12);letter-spacing:.3px">NO</span></div>
<div class="abs" style="right:231.75px;top:108.60px;line-height:19.5px;color:#fff;white-space:nowrap;text-align:right;">-190</div>
<div class="abs" style="left:0;top:196.00px;width:20px;height:1px;background:#dee2e6"></div>
<div class="abs" style="left:20px;top:196.00px;width:1386px;height:1px;background:#fbd3d3"></div>
<div class="abs" style="left:0;top:197.00px;width:20px;height:117.0px;background:#f8f8f8"></div>
<div class="abs" style="left:20px;top:197.00px;width:1386px;height:117.0px;background:#e87b7b"></div>
<div class="abs" style="left:4px;top:249.50px;width:12px;height:12px;border:1.5px solid #111;border-radius:3px;background:#fff"></div>
<div class="abs" style="left:29.25px;top:207.10px;line-height:19.5px;color:#fff;white-space:nowrap;">Fattura<br>immediata di<br>vendita<br>numero<br>0001/2025</div>
<div class="abs" style="right:1206.00px;top:207.10px;line-height:19.5px;color:#fff;white-space:nowrap;text-align:right;">0001/2025</div>
<div class="abs" style="left:219.00px;top:207.10px;line-height:19.5px;color:#fff;white-space:nowrap;">Mario Rossi</div>
<div class="abs" style="left:321.75px;top:207.10px;line-height:19.5px;color:#fff;white-space:nowrap;">Bonifico 30gg d.f.f.m.</div>
<div class="abs" style="left:472.30px;width:99.50px;top:207.10px;line-height:19.5px;color:#fff;white-space:nowrap;text-align:center;">17/01/2025</div>
<div class="abs" style="left:571.80px;width:94.50px;top:207.10px;line-height:19.5px;color:#fff;white-space:nowrap;text-align:center;">28/02/2025</div>
<div class="abs" style="right:660.35px;top:207.10px;line-height:19.5px;color:#fff;white-space:nowrap;text-align:right;">16.362,64</div>
<div class="abs" style="right:581.15px;top:207.10px;line-height:19.5px;color:#fff;white-space:nowrap;text-align:right;">0,00</div>
<div class="abs" style="right:492.25px;top:207.10px;line-height:19.5px;color:#fff;white-space:nowrap;text-align:right;">16.362,64</div>
<div class="abs" style="left:932.75px;top:207.10px;line-height:19.5px;color:#fff;white-space:nowrap;">SÌ</div>
<div class="abs" style="left:1010.10px;width:77.40px;top:207.70px;line-height:19.5px;text-align:center;white-space:nowrap"><span style="display:inline-block;font-size:8.6px;font-weight:normal;-webkit-text-stroke:.15px #3a0808;color:#3a0808;transform:scaleX(1.12);letter-spacing:.3px">NO</span></div>
<div class="abs" style="right:231.75px;top:207.10px;line-height:19.5px;color:#fff;white-space:nowrap;text-align:right;">-175</div>
<div class="abs" style="left:0;top:314.00px;width:20px;height:1px;background:#dee2e6"></div>
<div class="abs" style="left:20px;top:314.00px;width:1386px;height:1px;background:#fbd3d3"></div>
<div class="abs" style="left:0;top:315.00px;width:20px;height:97.5px;background:#fff"></div>
<div class="abs" style="left:20px;top:315.00px;width:1386px;height:97.5px;background:#f08080"></div>
<div class="abs" style="left:4px;top:357.75px;width:12px;height:12px;border:1.5px solid #111;border-radius:3px;background:#fff"></div>
<div class="abs" style="left:29.25px;top:325.10px;line-height:19.5px;color:#fff;white-space:nowrap;">Fattura<br>immediata di<br>acquisto<br>numero 3</div>
<div class="abs" style="right:1206.00px;top:325.10px;line-height:19.5px;color:#fff;white-space:nowrap;text-align:right;">3</div>
<div class="abs" style="left:219.00px;top:325.10px;line-height:19.5px;color:#fff;white-space:nowrap;">Stefano<br>Bianchi</div>
<div class="abs" style="left:321.75px;top:325.10px;line-height:19.5px;color:#fff;white-space:nowrap;">Bollettino bancario</div>
<div class="abs" style="left:472.30px;width:99.50px;top:325.10px;line-height:19.5px;color:#fff;white-space:nowrap;text-align:center;">13/03/2025</div>
<div class="abs" style="left:571.80px;width:94.50px;top:325.10px;line-height:19.5px;color:#fff;white-space:nowrap;text-align:center;">14/03/2025</div>
<div class="abs" style="right:660.35px;top:325.10px;line-height:19.5px;color:#fff;white-space:nowrap;text-align:right;">-77.670,08</div>
<div class="abs" style="right:581.15px;top:325.10px;line-height:19.5px;color:#fff;white-space:nowrap;text-align:right;">0,00</div>
<div class="abs" style="right:492.25px;top:325.10px;line-height:19.5px;color:#fff;white-space:nowrap;text-align:right;">-77.670,08</div>
<div class="abs" style="left:932.75px;top:325.10px;line-height:19.5px;color:#fff;white-space:nowrap;">SÌ</div>
<div class="abs" style="left:1010.10px;width:77.40px;top:325.70px;line-height:19.5px;text-align:center;white-space:nowrap"><span style="display:inline-block;font-size:8.6px;font-weight:normal;-webkit-text-stroke:.15px #3a0808;color:#3a0808;transform:scaleX(1.12);letter-spacing:.3px">NO</span></div>
<div class="abs" style="right:231.75px;top:325.10px;line-height:19.5px;color:#fff;white-space:nowrap;text-align:right;">-161</div>
<div class="abs" style="left:0;top:412.50px;width:20px;height:1px;background:#dee2e6"></div>
<div class="abs" style="left:20px;top:412.50px;width:1386px;height:1px;background:#fbd3d3"></div>
<div class="abs" style="left:0;top:413.50px;width:20px;height:117.0px;background:#f8f8f8"></div>
<div class="abs" style="left:20px;top:413.50px;width:1386px;height:117.0px;background:#e87b7b"></div>
<div class="abs" style="left:4px;top:466.00px;width:12px;height:12px;border:1.5px solid #111;border-radius:3px;background:#fff"></div>
<div class="abs" style="left:29.25px;top:423.60px;line-height:19.5px;color:#fff;white-space:nowrap;">Fattura<br>immediata di<br>vendita<br>numero<br>0002/2025</div>
<div class="abs" style="right:1206.00px;top:423.60px;line-height:19.5px;color:#fff;white-space:nowrap;text-align:right;">0002/2025</div>
<div class="abs" style="left:219.00px;top:423.60px;line-height:19.5px;color:#fff;white-space:nowrap;">Mario Rossi</div>
<div class="abs" style="left:321.75px;top:423.60px;line-height:19.5px;color:#fff;white-space:nowrap;">Bonifico 30gg d.f.f.m.</div>
<div class="abs" style="left:472.30px;width:99.50px;top:423.60px;line-height:19.5px;color:#fff;white-space:nowrap;text-align:center;">21/02/2025</div>
<div class="abs" style="left:571.80px;width:94.50px;top:423.60px;line-height:19.5px;color:#fff;white-space:nowrap;text-align:center;">31/03/2025</div>
<div class="abs" style="right:660.35px;top:423.60px;line-height:19.5px;color:#fff;white-space:nowrap;text-align:right;">55.962,62</div>
<div class="abs" style="right:581.15px;top:423.60px;line-height:19.5px;color:#fff;white-space:nowrap;text-align:right;">0,00</div>
<div class="abs" style="right:492.25px;top:423.60px;line-height:19.5px;color:#fff;white-space:nowrap;text-align:right;">55.962,62</div>
<div class="abs" style="left:932.75px;top:423.60px;line-height:19.5px;color:#fff;white-space:nowrap;">SÌ</div>
<div class="abs" style="left:1010.10px;width:77.40px;top:424.20px;line-height:19.5px;text-align:center;white-space:nowrap"><span style="display:inline-block;font-size:8.6px;font-weight:normal;-webkit-text-stroke:.15px #3a0808;color:#3a0808;transform:scaleX(1.12);letter-spacing:.3px">NO</span></div>
<div class="abs" style="right:231.75px;top:423.60px;line-height:19.5px;color:#fff;white-space:nowrap;text-align:right;">-144</div>
<div class="abs" style="left:0;top:530.50px;width:20px;height:1px;background:#dee2e6"></div>
<div class="abs" style="left:20px;top:530.50px;width:1386px;height:1px;background:#fbd3d3"></div>
<div class="abs" style="left:0;top:531.50px;width:20px;height:97.5px;background:#fff"></div>
<div class="abs" style="left:20px;top:531.50px;width:1386px;height:97.5px;background:#f08080"></div>
<div class="abs" style="left:4px;top:574.25px;width:12px;height:12px;border:1.5px solid #111;border-radius:3px;background:#fff"></div>
<div class="abs" style="left:29.25px;top:541.60px;line-height:19.5px;color:#fff;white-space:nowrap;">Fattura<br>immediata di<br>acquisto<br>numero 4</div>
<div class="abs" style="right:1206.00px;top:541.60px;line-height:19.5px;color:#fff;white-space:nowrap;text-align:right;">4</div>
<div class="abs" style="left:219.00px;top:541.60px;line-height:19.5px;color:#fff;white-space:nowrap;">Stefano<br>Bianchi</div>
<div class="abs" style="left:321.75px;top:541.60px;line-height:19.5px;color:#fff;white-space:nowrap;">Bancomat</div>
<div class="abs" style="left:472.30px;width:99.50px;top:541.60px;line-height:19.5px;color:#fff;white-space:nowrap;text-align:center;">17/04/2025</div>
<div class="abs" style="left:571.80px;width:94.50px;top:541.60px;line-height:19.5px;color:#fff;white-space:nowrap;text-align:center;">17/04/2025</div>
<div class="abs" style="right:660.35px;top:541.60px;line-height:19.5px;color:#fff;white-space:nowrap;text-align:right;">-103.118,06</div>
<div class="abs" style="right:581.15px;top:541.60px;line-height:19.5px;color:#fff;white-space:nowrap;text-align:right;">0,00</div>
<div class="abs" style="right:492.25px;top:541.60px;line-height:19.5px;color:#fff;white-space:nowrap;text-align:right;">-103.118,06</div>
<div class="abs" style="left:932.75px;top:541.60px;line-height:19.5px;color:#fff;white-space:nowrap;">SÌ</div>
<div class="abs" style="left:1010.10px;width:77.40px;top:542.20px;line-height:19.5px;text-align:center;white-space:nowrap"><span style="display:inline-block;font-size:8.6px;font-weight:normal;-webkit-text-stroke:.15px #3a0808;color:#3a0808;transform:scaleX(1.12);letter-spacing:.3px">NO</span></div>
<div class="abs" style="right:231.75px;top:541.60px;line-height:19.5px;color:#fff;white-space:nowrap;text-align:right;">-127</div>
</div>
<div class="abs" style="left:1676px;top:369px;width:12px;height:554px;background:#d0d0d0"></div>
<div class="abs" style="left:270px;top:923px;width:20px;height:1px;background:#dee2e6"></div>
<div class="abs" style="left:290px;top:923px;width:1386px;height:1px;background:#fbd3d3"></div>
<div class="abs" style="left:1679px;top:372px;width:6px;height:114px;border-radius:3px;background:#7d8184"></div>
</div>
<div id="cs">
<svg class="abs" style="left:14.2px;top:19.8px" width="12" height="12" viewBox="0 0 13 13"><g fill="#3c8dbc" transform="rotate(45 6.5 6.5)"><rect x="3.4" y="-1" width="1.5" height="4"/><rect x="8.1" y="-1" width="1.5" height="4"/><path d="M1.8 3h9.4v2.2a4.7 4.7 0 0 1-3.6 4.6v3.4H5.4V9.8A4.7 4.7 0 0 1 1.8 5.2z"/></g></svg>
<div class="abs" style="left:34.6px;top:15px;line-height:19.5px;color:#6c757d">PLUGIN</div>
<div class="abs" style="left:0;top:44px;width:199px;height:1px;background:#e5e7ea"></div>

<div class="abs" style="left:1px;top:56px;width:197px;height:39.5px;background:#007bff;border-radius:2px"></div>
<div class="abs" style="left:16.4px;top:66.5px;line-height:19.5px;color:#fff">Scadenzario</div>
<div class="abs" style="left:0;top:96px;width:199px;height:44px;background:#f8f9fa"></div>
<div class="abs" style="left:16.4px;top:108.5px;line-height:19.5px;color:#6c757d">Presentazioni Bancarie</div>
<div class="abs" style="left:0;top:140px;width:199px;height:1px;background:#e5e7ea"></div>
</div>
<div class="abs" style="left:1668.5px;top:120px;width:40.5px;height:40px;background:#f8f9fa;border-radius:6px 0 0 6px;box-shadow:-2px 2px 5px rgba(0,0,0,.08);z-index:4"></div>
<svg class="abs" style="left:1683px;top:131.7px;z-index:4" width="10" height="15" viewBox="0 0 10 15"><path d="M1.8 1.5l6 6-6 6" fill="none" stroke="#3c8dbc" stroke-width="2.6"/></svg>
<div id="vs"><div class="th"></div></div>
</div></body></html>
